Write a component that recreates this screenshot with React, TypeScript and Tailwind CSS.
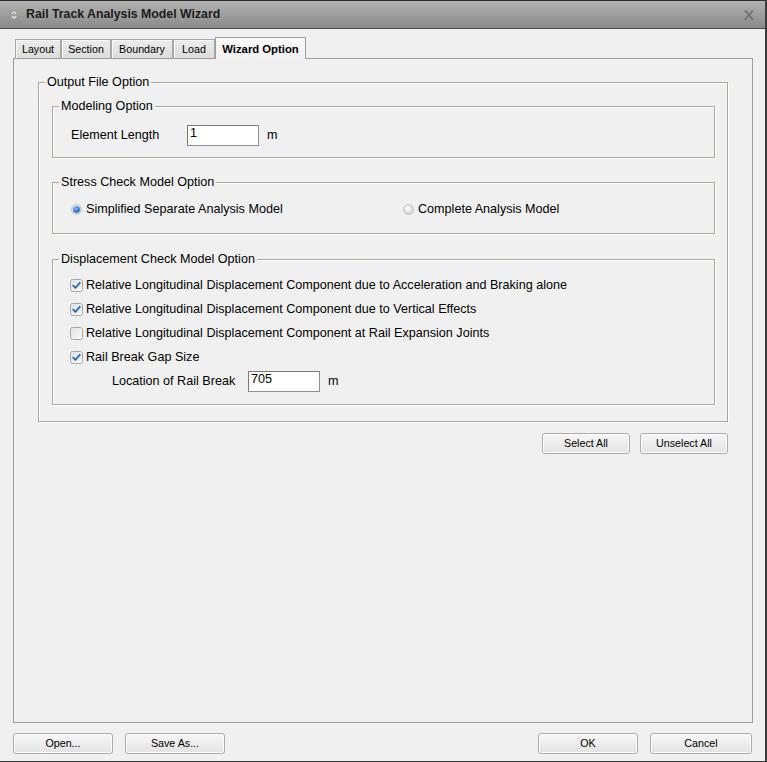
import React from "react";

const F = "font-['Liberation_Sans',Arial,sans-serif]";

type GroupProps = {
  title: string;
  className?: string;
  bodyClassName?: string;
  children: React.ReactNode;
};

// etched group box, like a win32 GROUPBOX
function Group({ title, className = "", bodyClassName = "", children }: GroupProps) {
  return (
    <div
      className={`flex flex-col border border-[#aca899] shadow-[1px_1px_0_#fff,inset_1px_1px_0_#fff] ${className}`}
    >
      <span className="-mt-[8px] ml-[6px] self-start bg-[#f0f0f0] px-[2px] leading-[14px]">
        {title}
      </span>
      <div className={`flex flex-col ${bodyClassName}`}>{children}</div>
    </div>
  );
}

function Field({ value, className = "" }: { value: string; className?: string }) {
  return (
    <div
      className={`h-[21px] border border-[#8f8f8f] border-t-[#7a7a7a] border-l-[#7a7a7a] bg-white pl-[2px] leading-[14px] ${className}`}
    >
      {value}
    </div>
  );
}

function Radio({ checked }: { checked: boolean }) {
  return (
    <svg width="11" height="11" viewBox="0 0 11 11" className="shrink-0">
      <defs>
        <radialGradient id="rOff" cx="0.4" cy="0.35" r="0.7">
          <stop offset="0" stopColor="#ffffff" />
          <stop offset="1" stopColor="#d4d4d4" />
        </radialGradient>
        <radialGradient id="rOn" cx="0.4" cy="0.35" r="0.7">
          <stop offset="0" stopColor="#8cc4ff" />
          <stop offset="0.6" stopColor="#2d7be0" />
          <stop offset="1" stopColor="#1a4f9e" />
        </radialGradient>
      </defs>
      <circle cx="5.5" cy="5.5" r="4.8" fill="url(#rOff)" stroke="#b4b4b4" strokeWidth="0.9" />
      {checked && <circle cx="5.5" cy="5.5" r="3.3" fill="url(#rOn)" />}
    </svg>
  );
}

function Check({ checked }: { checked: boolean }) {
  return (
    <svg width="13" height="13" viewBox="0 0 13 13" className="shrink-0">
      <defs>
        <linearGradient id="cbg" x1="0" y1="0" x2="1" y2="1">
          <stop offset="0" stopColor="#e2e2e2" />
          <stop offset="1" stopColor="#fbfbfb" />
        </linearGradient>
      </defs>
      <rect x="0.5" y="0.5" width="12" height="12" rx="2" fill="url(#cbg)" stroke="#a9a9a9" />
      {checked && (
        <path
          d="M3.2 6.6 L5.4 8.9 L9.8 3.8"
          fill="none"
          stroke="#2f6bc6"
          strokeWidth="1.9"
          strokeLinecap="round"
          strokeLinejoin="round"
        />
      )}
    </svg>
  );
}

function Btn({ label, className = "" }: { label: string; className?: string }) {
  return (
    <button
      className={`h-[21px] rounded-[3px] border border-[#acacac] bg-[linear-gradient(#f7f7f7,#e3e3e3)] text-[10.7px] leading-none text-black shadow-[inset_0_0_0_1px_#fdfdfd] ${className}`}
    >
      {label}
    </button>
  );
}

const tabs = [
  { label: "Layout", w: "w-[46px]" },
  { label: "Section", w: "w-[50px]" },
  { label: "Boundary", w: "w-[62px]" },
  { label: "Load", w: "w-[42px]" },
];

const checks = [
  { label: "Relative Longitudinal Displacement Component due to Acceleration and Braking alone", on: true },
  { label: "Relative Longitudinal Displacement Component due to Vertical Effects", on: true },
  { label: "Relative Longitudinal Displacement Component at Rail Expansion Joints", on: false },
  { label: "Rail Break Gap Size", on: true },
];

export default function App() {
  return (
    <div
      className={`flex h-[762px] w-[767px] flex-col border-r-2 border-b border-[#3b3b3b] bg-[#f0f0f0] text-[12.6px] text-black ${F}`}
    >
      {/* title bar */}
      <div className="flex h-[29px] items-center border-t border-b border-t-[#2f2f2f] border-b-[#4a4a4a] bg-[linear-gradient(#b2b2b2,#8a8a8a)] pl-[10px] pr-[11px]">
        <svg width="8" height="10" viewBox="0 0 8 10" className="shrink-0">
          <circle cx="4" cy="5" r="3.8" fill="#9a9a9a" />
          <path d="M1.8 4 L4 1.8 L6.2 4" fill="none" stroke="#e8e8e8" strokeWidth="1.2" />
          <path d="M1.8 6 L4 8.2 L6.2 6" fill="none" stroke="#e8e8e8" strokeWidth="1.2" />
        </svg>
        <span className="ml-[8px] text-[12.3px] font-bold text-[#1b1b1b]">
          Rail Track Analysis Model Wizard
        </span>
        <div className="flex-1" />
        <svg width="10" height="10" viewBox="0 0 10 10">
          <path d="M1.5 1 L8.5 9 M8.5 1 L1.5 9" stroke="#6c6c6c" strokeWidth="1.5" />
          <path d="M0 1 H3 M7 1 H10 M0 9.3 H3 M7 9.3 H10" stroke="#6c6c6c" strokeWidth="0.8" />
        </svg>
      </div>

      <div className="flex flex-1 flex-col pl-[13px] pr-[12px] pb-[7px]">
        {/* tab strip */}
        <div className="mt-[8px] flex h-[21px] items-end pl-[2px]">
          {tabs.map((t) => (
            <div
              key={t.label}
              className={`flex h-[19px] items-center justify-center border border-b-0 border-[#a8a8a8] bg-[linear-gradient(#ececec,#dcdcdc)] text-[10.7px] shadow-[inset_1px_1px_0_#f8f8f8] ${t.w}`}
            >
              {t.label}
            </div>
          ))}
          <div className="relative z-[1] -mb-px flex h-[22px] w-[91px] items-center justify-center border border-b-0 border-[#9d9d9d] bg-[linear-gradient(#fafafa,#f0f0f0)] pt-[1px] text-[11.3px] font-bold">
            Wizard Option
          </div>
        </div>

        {/* tab page */}
        <div className="flex flex-1 flex-col border border-[#9d9d9d] pt-[23px] pl-[24px] pr-[24px]">
          <Group title="Output File Option" bodyClassName="pl-[13px] pr-[12px] pb-[16px]">
            <Group title="Modeling Option" className="mt-[17px]" bodyClassName="pb-[11px]">
              <div className="mt-[12px] flex h-[21px] items-center pl-[18px]">
                <span className="w-[116px]">Element Length</span>
                <Field value="1" className="w-[72px]" />
                <span className="ml-[8px]">m</span>
              </div>
            </Group>

            <Group title="Stress Check Model Option" className="mt-[24px]" bodyClassName="pb-[16px]">
              <div className="mt-[12px] flex h-[16px] items-center pl-[18px]">
                <label className="flex w-[332px] items-center gap-[4px]">
                  <Radio checked />
                  <span>Simplified Separate Analysis Model</span>
                </label>
                <label className="flex items-center gap-[4px]">
                  <Radio checked={false} />
                  <span>Complete Analysis Model</span>
                </label>
              </div>
            </Group>

            <Group title="Displacement Check Model Option" className="mt-[25px]" bodyClassName="pb-[12px]">
              <div className="mt-[11px] flex flex-col gap-[8px] pl-[17px]">
                {checks.map((c) => (
                  <label key={c.label} className="flex h-[16px] items-center gap-[3px]">
                    <Check checked={c.on} />
                    <span>{c.label}</span>
                  </label>
                ))}
              </div>
              <div className="mt-[6px] flex h-[21px] items-center pl-[59px]">
                <span className="w-[136px]">Location of Rail Break</span>
                <Field value="705" className="w-[72px]" />
                <span className="ml-[8px]">m</span>
              </div>
            </Group>
          </Group>

          <div className="mt-[11px] flex justify-end gap-[10px]">
            <Btn label="Select All" className="w-[88px]" />
            <Btn label="Unselect All" className="w-[88px]" />
          </div>
        </div>

        {/* dialog buttons */}
        <div className="mt-[10px] flex justify-between">
          <div className="flex gap-[12px]">
            <Btn label="Open..." className="w-[100px]" />
            <Btn label="Save As..." className="w-[100px]" />
          </div>
          <div className="mr-[1px] flex gap-[12px]">
            <Btn label="OK" className="w-[100px]" />
            <Btn label="Cancel" className="w-[102px]" />
          </div>
        </div>
      </div>
    </div>
  );
}
